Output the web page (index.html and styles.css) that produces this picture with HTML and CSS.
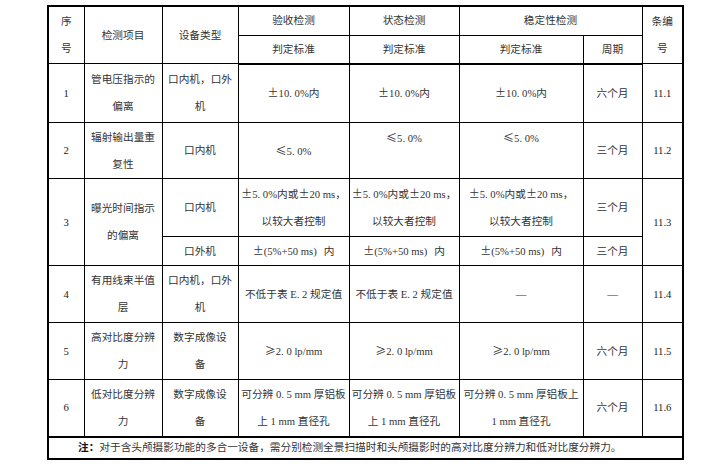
FILE: index.html
```html
<!DOCTYPE html>
<html lang="zh-CN">
<head>
<meta charset="utf-8">
<title>检测项目表</title>
<link rel="stylesheet" href="styles.css">
</head>
<body>
<table class="spec">
  <colgroup>
    <col class="c-no">
    <col class="c-item">
    <col class="c-dev">
    <col class="c-acc">
    <col class="c-state">
    <col class="c-stab">
    <col class="c-period">
    <col class="c-clause">
  </colgroup>
  <thead>
    <tr class="h1">
      <th rowspan="2">序<br>号</th>
      <th rowspan="2">检测项目</th>
      <th rowspan="2">设备类型</th>
      <th>验收检测</th>
      <th>状态检测</th>
      <th colspan="2">稳定性检测</th>
      <th rowspan="2">条编<br>号</th>
    </tr>
    <tr class="h2">
      <th>判定标准</th>
      <th>判定标准</th>
      <th>判定标准</th>
      <th>周期</th>
    </tr>
  </thead>
  <tbody>
    <tr class="r1">
      <td class="num">1</td>
      <td>管电压指示的<br>偏离</td>
      <td>口内机，口外<br>机</td>
      <td><span class="fw">±</span>10. 0%内</td>
      <td><span class="fw">±</span>10. 0%内</td>
      <td><span class="fw">±</span>10. 0%内</td>
      <td>六个月</td>
      <td class="num">11.1</td>
    </tr>
    <tr class="r2">
      <td class="num">2</td>
      <td>辐射输出量重<br>复性</td>
      <td>口内机</td>
      <td><span class="fw">≤</span>5. 0%</td>
      <td class="top"><span class="fw">≤</span>5. 0%</td>
      <td class="top"><span class="fw">≤</span>5. 0%</td>
      <td>三个月</td>
      <td class="num">11.2</td>
    </tr>
    <tr class="r3a">
      <td class="num" rowspan="2">3</td>
      <td rowspan="2">曝光时间指示<br>的偏离</td>
      <td>口内机</td>
      <td><span class="fw">±</span>5. 0%内或<span class="fw">±</span>20 ms，<br>以较大者控制</td>
      <td><span class="fw">±</span>5. 0%内或<span class="fw">±</span>20 ms，<br>以较大者控制</td>
      <td><span class="fw">±</span>5. 0%内或<span class="fw">±</span>20 ms，<br>以较大者控制</td>
      <td>三个月</td>
      <td class="num" rowspan="2">11.3</td>
    </tr>
    <tr class="r3b">
      <td>口外机</td>
      <td><span class="fw">±</span>(5%+50 ms)<span class="gap"></span>内</td>
      <td><span class="fw">±</span>(5%+50 ms)<span class="gap"></span>内</td>
      <td><span class="fw">±</span>(5%+50 ms)<span class="gap"></span>内</td>
      <td>三个月</td>
    </tr>
    <tr class="r4">
      <td class="num">4</td>
      <td>有用线束半值<br>层</td>
      <td>口内机，口外<br>机</td>
      <td>不低于表 E. 2 规定值</td>
      <td>不低于表 E. 2 规定值</td>
      <td>—</td>
      <td>—</td>
      <td class="num">11.4</td>
    </tr>
    <tr class="r5">
      <td class="num">5</td>
      <td>高对比度分辨<br>力</td>
      <td>数字成像设<br>备</td>
      <td><span class="fw">≥</span>2. 0 lp/mm</td>
      <td><span class="fw">≥</span>2. 0 lp/mm</td>
      <td><span class="fw">≥</span>2. 0 lp/mm</td>
      <td>六个月</td>
      <td class="num">11.5</td>
    </tr>
    <tr class="r6">
      <td class="num">6</td>
      <td>低对比度分辨<br>力</td>
      <td>数字成像设<br>备</td>
      <td>可分辨 0. 5 mm 厚铝板<br>上 1 mm 直径孔</td>
      <td>可分辨 0. 5 mm 厚铝板<br>上 1 mm 直径孔</td>
      <td>可分辨 0. 5 mm 厚铝板上<br>1 mm 直径孔</td>
      <td>六个月</td>
      <td class="num">11.6</td>
    </tr>
  </tbody>
  <tfoot>
    <tr class="note">
      <td colspan="8"><b>注：</b>对于含头颅摄影功能的多合一设备，需分别检测全景扫描时和头颅摄影时的高对比度分辨力和低对比度分辨力。</td>
    </tr>
  </tfoot>
</table>
</body>
</html>
```
FILE: styles.css
```css
html, body {
  margin: 0;
  padding: 0;
  background: #ffffff;
}

body {
  padding: 5px 0 0 47px;
}

.spec {
  border-collapse: collapse;
  table-layout: fixed;
  width: 635px;
  border: 2px solid #000;
  font-family: "Liberation Serif", "Noto Sans CJK SC", serif;
  font-size: 10.67px;
  color: #333;
}

.c-no { width: 36px; }
.c-item { width: 78px; }
.c-dev { width: 76px; }
.c-acc { width: 111px; }
.c-state { width: 110px; }
.c-stab { width: 124px; }
.c-period { width: 59px; }
.c-clause { width: 41px; }

.spec th,
.spec td {
  border: 1px solid #000;
  padding: 0;
  text-align: center;
  vertical-align: middle;
  font-weight: normal;
  line-height: 27px;
  white-space: nowrap;
}

.spec thead tr.h2 th {
  border-bottom: 2px solid #000;
}

.spec td.top {
  vertical-align: top;
  padding-top: 1px;
}

.spec td.num {
  color: #222;
}

.fw {
  display: inline-block;
  width: 1em;
  text-align: center;
  font-family: "Noto Sans CJK SC", sans-serif;
  font-size: 11px;
}

.gap {
  display: inline-block;
  width: 7px;
}

.h1 { height: 29px; }
.h2 { height: 28px; }
.r1 { height: 59px; }
.r2 { height: 56px; }
.r3a { height: 58px; }
.r3b { height: 28px; }
.r4 { height: 57px; }
.r5 { height: 57px; }
.r6 { height: 57px; }

.spec tr.note td {
  border-top: 2px solid #000;
  text-align: left;
  padding-left: 29px;
  line-height: 17px;
  height: 20px;
}

.spec tr.note b {
  font-weight: bold;
  color: #111;
}
```
